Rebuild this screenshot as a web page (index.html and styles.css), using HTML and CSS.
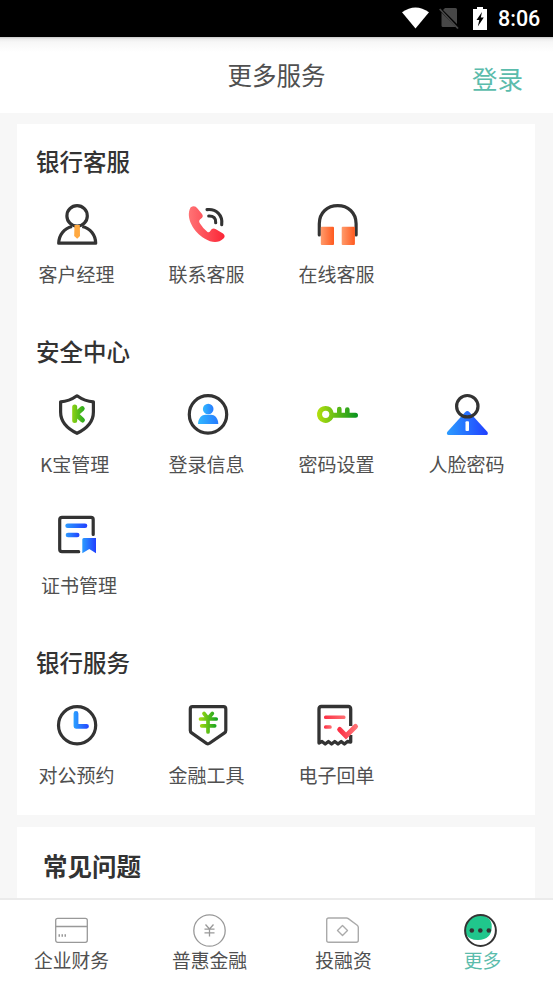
FILE: index.html
```html
<!DOCTYPE html>
<html lang="zh-CN">
<head>
<meta charset="utf-8">
<title>更多服务</title>
<link rel="stylesheet" href="styles.css">
</head>
<body>
<svg class="defs" width="0" height="0" aria-hidden="true">
  <defs>
    <linearGradient id="red"><stop offset="0" stop-color="#ff7375"/><stop offset="1" stop-color="#fb2536"/></linearGradient>
    <linearGradient id="rose"><stop offset="0" stop-color="#fc3045"/><stop offset="1" stop-color="#ff7073"/></linearGradient>
    <linearGradient id="orange"><stop offset="0" stop-color="#ff9b6b"/><stop offset="1" stop-color="#ff5a20"/></linearGradient>
    <linearGradient id="green" gradientUnits="userSpaceOnUse" x1="12" y1="0" x2="31" y2="0"><stop offset="0" stop-color="#a8dc10"/><stop offset="1" stop-color="#0b9f22"/></linearGradient>
    <linearGradient id="keygreen" gradientUnits="userSpaceOnUse" x1="0" y1="0" x2="41" y2="0"><stop offset="0" stop-color="#b4e00e"/><stop offset="1" stop-color="#05921f"/></linearGradient>
    <linearGradient id="sky"><stop offset="0" stop-color="#31b9ff"/><stop offset="1" stop-color="#277bff"/></linearGradient>
    <linearGradient id="blue"><stop offset="0" stop-color="#2c9cff"/><stop offset="1" stop-color="#2140ff"/></linearGradient>
    <linearGradient id="hand" gradientUnits="userSpaceOnUse" x1="17" y1="0" x2="32" y2="0"><stop offset="0" stop-color="#2a9eff"/><stop offset="1" stop-color="#2545ff"/></linearGradient>
  </defs>
</svg>
<div class="status">
  <svg class="wifi" viewBox="0 0 28 22"><path d="M0 5Q14-5 28 5L14 22Z" fill="#fff"/></svg>
  <svg class="sim" viewBox="0 0 20 23"><path d="M6 1H16.500Q18 1 18 2.500V17L4 3Z M2.500 5.500L17 20H4Q2.500 20 2.500 18.500Z" fill="#474747"/><path d="M.7 2L19 21.500" stroke="#474747" stroke-width="1.800"/></svg>
  <svg class="battery" viewBox="0 0 14 23"><path d="M4 0H10V2H14V23H0V2H4Z" fill="#fff"/><path d="M9 5L3.500 13H6.300L4.800 19.500L10.800 10.500H7.800Z" fill="#000"/></svg>
  <span class="time">8:06</span>
</div>
<header class="header">
  <h1 class="header-title">更多服务</h1>
  <a class="login">登录</a>
</header>
<main class="content">
  <div class="card">
    <section>
      <h2 class="section-title">银行客服</h2>
      <div class="grid">
        <div class="item">
          <svg class="icon" viewBox="0 0 41 41"><g fill="none" stroke="#333" stroke-width="3.200"><circle cx="20.100" cy="11.900" r="10.200"/><path d="M15 22.500C7 24.500 2 31 1.700 39.200H38.700C38.500 31 33.500 24.500 25.300 22.500" stroke-linejoin="round"/></g><path d="M17.500 21H22.800L23 32L20.200 34.700L17.200 32Z" fill="#ffa941"/></svg>
          <span class="label">客户经理</span>
        </div>
        <div class="item">
          <svg class="icon" viewBox="0 0 41 41"><path d="M3.500 3.600Q7.500.5 10.500 4.500L15 10Q16.800 12.500 14.500 14.200Q10.700 16.500 13 19.500Q16 24.500 20.500 28Q22 29 23.300 27Q25.200 23.500 28.500 25L36 29.500Q39 32 36.500 34.500Q29 41.500 17.500 34.500C7 28.500-2 14 3.500 3.600Z" fill="url(#red)"/><g fill="none" stroke="#333" stroke-width="3.100" stroke-linecap="round"><path d="M20 5.600C29 4.500 36 11 34.700 20.700M21.700 12Q29.200 11.800 28.700 18.800"/></g></svg>
          <span class="label">联系客服</span>
        </div>
        <div class="item">
          <svg class="icon" viewBox="0 0 41 41"><path d="M2.300 31V19.800C2.300 8.500 10.500 1.600 20.700 1.600S39.100 8.500 39.100 19.800V31" fill="none" stroke="#333" stroke-width="3.200" stroke-linecap="round"/><rect x="3.800" y="22.700" width="13.200" height="18.300" rx="1" fill="url(#orange)"/><rect x="24.700" y="22.700" width="13.200" height="18.300" rx="1" fill="url(#orange)"/></svg>
          <span class="label">在线客服</span>
        </div>
      </div>
    </section>
    <section>
      <h2 class="section-title">安全中心</h2>
      <div class="grid">
        <div class="item">
          <svg class="icon" viewBox="0 0 41 41"><path d="M20 1.800Q12 7.500 3.600 7.800V18C3.600 28.500 10 34.500 20 39.300C30 34.500 36.400 28.500 36.400 18V7.800Q28 7.500 20 1.800Z" fill="none" stroke="#333" stroke-width="3.200" stroke-linejoin="round"/><path d="M17.700 13V26.500M25.200 14.700L19 20.200L25.400 26" fill="none" stroke="url(#green)" stroke-width="5" stroke-linecap="round" stroke-linejoin="round"/></svg>
          <span class="label label-k">K宝管理</span>
        </div>
        <div class="item">
          <svg class="icon" viewBox="0 0 41 41"><circle cx="21" cy="20.400" r="18.700" fill="none" stroke="#333" stroke-width="3.200"/><path d="M11 30C11.200 24 15 20.800 18.500 20.800H24C27.500 20.800 31.200 24 31.300 30Z" fill="url(#sky)"/><circle cx="21.200" cy="15" r="5.300" fill="url(#sky)"/></svg>
          <span class="label">登录信息</span>
        </div>
        <div class="item">
          <svg class="icon" viewBox="0 0 41 41"><path d="M8.700 11.900A8.500 8.500 0 0 1 16.600 18.700H20V15Q20 12.700 22.300 12.700T24.600 15V18.700H28V15.500Q28 13.300 30.300 13.300T32.600 15.500V18.700H38.500Q41 18.700 41 21.200T38.500 23.700H16.300A8.500 8.500 0 1 1 8.700 11.900Z" fill="url(#keygreen)"/><circle cx="8.700" cy="20.300" r="3.600" fill="#fff"/></svg>
          <span class="label">密码设置</span>
        </div>
        <div class="item">
          <svg class="icon" viewBox="0 0 41 41"><path d="M18.300 18Q20.300 16 22.300 18L40.500 38Q41.500 40.500 39.500 41H1.500Q-.8 40.500.2 38Z" fill="url(#blue)"/><circle cx="20.300" cy="12.200" r="10.700" fill="none" stroke="#333" stroke-width="3.200"/><rect x="18.500" y="27.300" width="3.500" height="9.700" rx="1" fill="#fff"/></svg>
          <span class="label">人脸密码</span>
        </div>
        <div class="item">
          <svg class="icon" viewBox="0 0 41 41"><path d="M36.200 19.500V4.500Q36.200 2.400 34 2.400H5Q2.700 2.400 2.700 4.700V34.300Q2.700 36.700 5 36.700H21.700" fill="none" stroke="#333" stroke-width="3.200" stroke-linecap="round"/><rect x="8.300" y="8.500" width="22" height="4.600" rx="2.300" fill="url(#blue)"/><rect x="8.700" y="17.700" width="13.800" height="4.600" rx="2.300" fill="url(#blue)"/><path d="M26.800 23H39V38.300L32.300 34L25.300 38.300V24.500Q25.300 23 26.800 23Z" fill="url(#blue)"/></svg>
          <span class="label label-right">证书管理</span>
        </div>
      </div>
    </section>
    <section>
      <h2 class="section-title">银行服务</h2>
      <div class="grid">
        <div class="item">
          <svg class="icon" viewBox="0 0 41 41"><circle cx="20.100" cy="20.300" r="18.600" fill="none" stroke="#333" stroke-width="3.200"/><path d="M19 8.500V21.300H29.500" fill="none" stroke="url(#hand)" stroke-width="4.800" stroke-linecap="round" stroke-linejoin="round"/></svg>
          <span class="label">对公预约</span>
        </div>
        <div class="item">
          <svg class="icon" viewBox="0 0 41 41"><path d="M5.500 1.600H36.500Q38.800 1.600 38.800 4V25.500Q38.800 27 37.500 27.900L22.500 38.300Q21 39.300 19.500 38.300L4.600 27.900Q3.300 27 3.300 25.500V4Q3.300 1.600 5.500 1.600Z" fill="none" stroke="#333" stroke-width="3.200"/><path d="M17 8.500L21 13.500L25.300 8.500M13.500 14H29.200M14.700 20.800H27.700M21 14.500V27" fill="none" stroke="url(#green)" stroke-width="3.700" stroke-linecap="round"/></svg>
          <span class="label">金融工具</span>
        </div>
        <div class="item">
          <svg class="icon" viewBox="0 0 41 41"><path d="M33.700 21V4Q33.700 1.500 31.300 1.500H4.300Q2 1.500 2 4V38L5 36.500L8.200 39L11.400 36.500L14.600 39L17.800 36.500L21 39L24.200 36.500L27.400 39L30.500 36.500L33.700 37V30" fill="none" stroke="#333" stroke-width="3.300" stroke-linejoin="round"/><rect x="7" y="10.500" width="21.500" height="3.600" rx="1.500" fill="url(#rose)"/><rect x="7" y="20.200" width="7.700" height="3.600" rx="1.500" fill="url(#rose)"/><path d="M22.700 24.500L29 31L38.500 21.500" fill="none" stroke="url(#rose)" stroke-width="5" stroke-linecap="round"/></svg>
          <span class="label">电子回单</span>
        </div>
      </div>
    </section>
  </div>
  <div class="card faq">
    <h2 class="faq-title">常见问题</h2>
  </div>
</main>
<nav class="tabs">
  <div class="tab">
    <svg class="tab-icon" viewBox="0 0 33 33"><g fill="none" stroke="#999" stroke-width="1.300"><rect x=".7" y="4.300" width="31.600" height="24" rx="2"/><path d="M.7 12.500H32.300"/><path d="M3.500 21.500H11.500" stroke-width="2.500" stroke-dasharray="1.500 1.500"/></g></svg>
    <span class="tab-label">企业财务</span>
  </div>
  <div class="tab">
    <svg class="tab-icon" viewBox="0 0 33 33"><g fill="none" stroke="#999" stroke-width="1.300"><circle cx="16.500" cy="16.500" r="15.700"/><path d="M12.500 10.500L16.500 15L20.500 10.500M11.500 15.200H21.500M11.500 18.800H21.500M16.500 15V22.500"/></g></svg>
    <span class="tab-label">普惠金融</span>
  </div>
  <div class="tab tab-invest">
    <svg class="tab-icon" viewBox="0 0 33 33"><g fill="none" stroke="#aaa" stroke-width="1.400"><path d="M2.700 4H20.500Q21.500 4 22.300 4.600L31.200 11.300Q32.300 12.200 32.300 13.500V26.300Q32.300 28.300 30.300 28.300H2.700Q.7 28.300 .7 26.300V6Q.7 4 2.700 4Z"/><path d="M16.500 11.500L21.500 16.500L16.500 21.500L11.500 16.500Z" stroke-linejoin="round"/></g></svg>
    <span class="tab-label">投融资</span>
  </div>
  <div class="tab tab-active">
    <svg class="tab-icon" viewBox="0 0 33 33"><path d="M2 20A14.500 14.500 0 0 1 24 4Q28 7 27.700 13Q27.700 25.500 14 26Q5 26 2 20Z" fill="#20c68c"/><circle cx="16.500" cy="16.500" r="15.400" fill="none" stroke="#333" stroke-width="2"/><g fill="#333"><circle cx="7.800" cy="16.500" r="2.300"/><circle cx="16.300" cy="16.500" r="2.300"/><circle cx="24.800" cy="16.500" r="2.300"/></g></svg>
    <span class="tab-label">更多</span>
  </div>
</nav>
</body>
</html>
```
FILE: styles.css
```css
* { box-sizing: border-box; }
body {
  margin: 0;
  height: 983px;
  display: flex;
  flex-direction: column;
  overflow: hidden;
  background: #f7f7f7;
  color: #333;
  font-family: "Noto Sans CJK SC", sans-serif;
}
h1, h2 { margin: 0; }
svg { display: block; flex: none; }
.defs { position: absolute; }

.status {
  height: 37px;
  flex: none;
  display: flex;
  align-items: flex-start;
  padding: 7px 12px 0 402px;
  background: #000;
}
.wifi { width: 27px; height: 22px; }
.sim { width: 20px; height: 23px; margin-left: 10px; }
.battery { width: 14px; height: 23px; margin-left: 14px; }
.time {
  margin-left: 11px;
  color: #fff;
  font: 500 21.5px/24px Roboto, sans-serif;
}

.header {
  height: 76px;
  flex: none;
  display: grid;
  grid-template-columns: 1fr auto 1fr;
  background: linear-gradient(#c8c8c8 0, #ececec 2px, #f7f7f7 5px, #fff 15px);
}
.header-title {
  grid-column: 2;
  font-size: 24.5px;
  line-height: 76px;
  font-weight: 400;
  color: #505050;
}
.login {
  justify-self: end;
  padding-right: 30px;
  font-size: 25.5px;
  line-height: 81px;
  color: #5bbcac;
}

.content {
  flex: 1;
  min-height: 0;
  overflow: hidden;
  padding: 11px 18px 0 17px;
}
.card { background: #fff; }
.section-title {
  height: 69px;
  padding: 17px 0 0 19px;
  font-size: 23.5px;
  line-height: 40px;
  font-weight: 500;
}
.grid {
  display: grid;
  grid-template-columns: repeat(4, 130px);
  grid-auto-rows: 121px;
  padding-left: 22px;
  margin-right: -24px;
}
.item { width: 76px; padding-top: 11px; }
.icon { width: 41px; height: 41px; margin-left: 18px; overflow: visible; }
.label {
  display: block;
  margin: 15px 0 0 -0.5px;
  font-size: 19px;
  line-height: 28px;
  white-space: nowrap;
  color: #505050;
}
.label-k { margin-left: 1px; }
.label-right { margin-left: 2px; }

.faq { height: 160px; margin-top: 12px; padding: 19px 0 0 26px; }
.faq-title { font-size: 24.5px; line-height: 40px; font-weight: 700; }

.tabs {
  height: 85px;
  flex: none;
  display: grid;
  grid-template-columns: 138px 138px 130px 1fr;
  padding-left: 2px;
  background: #fff;
  border-top: 2px solid #ebebeb;
}
.tab {
  display: flex;
  flex-direction: column;
  align-items: center;
  padding-top: 14px;
}
.tab-icon { width: 33px; height: 33px; }
.tab-invest .tab-icon { margin-right: 2px; }
.tab-label { margin-left: 1px; font-size: 18.8px; line-height: 26px; color: #505050; }
.tab-active .tab-label { color: #5bbcac; margin-left: 4px; }
```
